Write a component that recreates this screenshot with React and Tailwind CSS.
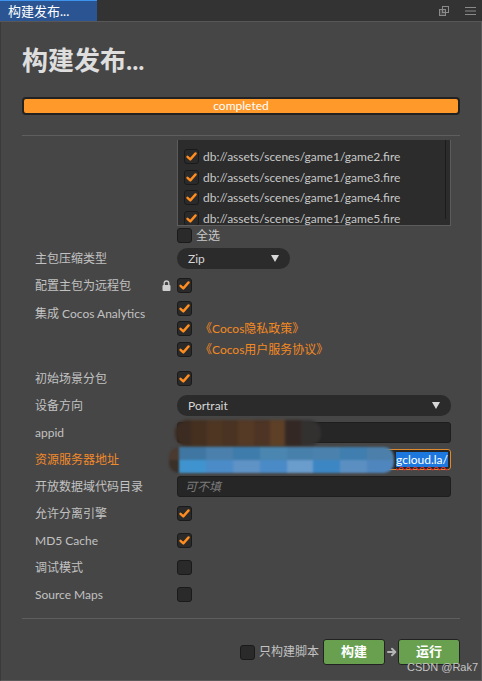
import React from 'react'

const FONT = "font-[Lato,'Noto_Sans_CJK_SC',sans-serif]"

function Check({ checked }) {
  return (
    <div className="w-[15px] h-[15px] shrink-0 rounded-[3px] bg-[#2a2a2a] border border-[#1a1a1a] flex items-center justify-center">
      {checked && (
        <svg width="13" height="13" viewBox="0 0 13 13">
          <path d="M2.5 6.8 L5.3 9.4 L10.6 3.4" fill="none" stroke="#ff8d1f" strokeWidth="2.4" strokeLinecap="round" strokeLinejoin="round" />
        </svg>
      )}
    </div>
  )
}

function Label({ children, orange }) {
  return (
    <div className={`w-[155px] shrink-0 pl-[13px] text-[12px] leading-[16px] ${orange ? 'text-[#f28a2b]' : 'text-[#c2c2c2]'}`}>
      {children}
    </div>
  )
}

function Triangle() {
  return (
    <svg width="8" height="7" viewBox="0 0 8 7">
      <path d="M0 0 H8 L4 7 Z" fill="#d8d8d8" />
    </svg>
  )
}

const scenes = ['game2', 'game3', 'game4', 'game5']

export default function App() {
  return (
    <div className={`w-[482px] h-[681px] bg-[#464646] flex flex-col overflow-hidden relative ${FONT}`}>
      {/* tab bar */}
      <div className="h-[22px] shrink-0 bg-[#333333] border-b border-[#575757] flex items-stretch">
        <div className="w-[97px] bg-[#2a5592] border-t border-[#3d93ee] text-white text-[13px] leading-[20px] pl-[8px]">
          构建发布...
        </div>
        <div className="flex-1" />
        <div className="flex items-center gap-[15px] pr-[6px]">
          <svg width="12" height="12" viewBox="0 0 12 12">
            <rect x="1.5" y="4.5" width="6" height="6" fill="#4a4a4a" stroke="#8a8a8a" />
            <rect x="4.5" y="1.5" width="6" height="6" fill="none" stroke="#8a8a8a" />
          </svg>
          <svg width="11" height="10" viewBox="0 0 11 10">
            <path d="M0 1.5 H11 M0 5 H11 M0 8.5 H11" stroke="#8a8a8a" strokeWidth="1.2" />
          </svg>
        </div>
      </div>

      {/* body */}
      <div className="flex-1 flex flex-col px-[21px] border-x border-b border-[#5a5a5a] border-l-[#3a3a3a]">
        <div className="mt-[23px] text-[26px] leading-[30px] font-bold text-[#dedede]">构建发布...</div>

        <div className="mt-[22px] h-[18px] rounded-[4px] border-2 border-[#222222] bg-[#ff992a] flex items-center justify-center text-white text-[12px] leading-[14px]">
          completed
        </div>

        <div className="mt-[20px] h-px bg-[#5e5e5e]" />

        {/* scroll area */}
        <div className="relative h-[482px] overflow-hidden">
          {/* outer scrollbar */}
          <div className="absolute left-[444px] top-[14px] w-px h-[175px] bg-[#1e1e1e]" />
          <div className="absolute left-[443px] top-[189px] w-[3px] h-[278px] bg-[#7a7a7a]" />

          <div className="flex flex-col">
            {/* scene list */}
            <div className="mt-[4px] flex">
              <div className="w-[155px] shrink-0" />
              <div className="relative w-[274px] h-[86px] bg-[#2c2c2c] border-x border-b border-[#5c5c5c] overflow-hidden">
                <div className="absolute left-[267px] top-0 w-px h-[79px] bg-[#1c1c1c]" />
                <div className="pt-[9px] pl-[6px] flex flex-col">
                  {scenes.map(s => (
                    <div key={s} className="h-[20.6px] flex items-start gap-[4px]">
                      <Check checked />
                      <span className="text-[12px] leading-[15px] text-[#c8c8c8]">db://assets/scenes/game1/{s}.fire</span>
                    </div>
                  ))}
                </div>
              </div>
            </div>

            {/* select all */}
            <div className="mt-[2px] flex items-center h-[15px]">
              <div className="w-[155px] shrink-0" />
              <Check />
              <span className="ml-[4px] text-[12px] text-[#c8c8c8]">全选</span>
            </div>

            <div className="mt-[5px] flex items-center h-[21px]">
              <Label>主包压缩类型</Label>
              <div className="w-[113px] h-[21px] rounded-full bg-[#2b2b2b] flex items-center justify-between pl-[11px] pr-[11px] text-[12px] text-[#d6d6d6]">
                <span>Zip</span>
                <Triangle />
              </div>
            </div>

            <div className="mt-[9px] flex items-center h-[15px]">
              <Label>
                <div className="flex items-center justify-between pr-[6px]">
                  <span>配置主包为远程包</span>
                  <svg width="9" height="11" viewBox="0 0 9 11">
                    <path d="M2.2 5 V3.3 A2.3 2.3 0 0 1 6.8 3.3 V5" fill="none" stroke="#cfcfcf" strokeWidth="1.3" />
                    <rect x="0.5" y="5" width="8" height="6" rx="1" fill="#cfcfcf" />
                  </svg>
                </div>
              </Label>
              <Check checked />
            </div>

            <div className="mt-[8px] flex items-start">
              <div className="pt-[5px]">
                <Label>集成 Cocos Analytics</Label>
              </div>
              <div className="flex flex-col">
                <div className="h-[15px] flex items-center"><Check checked /></div>
                <div className="mt-[5px] h-[15px] flex items-center gap-[8px]">
                  <Check checked />
                  <span className="text-[12px] text-[#f58a22]">《Cocos隐私政策》</span>
                </div>
                <div className="mt-[6px] h-[15px] flex items-center gap-[8px]">
                  <Check checked />
                  <span className="text-[12px] text-[#f58a22]">《Cocos用户服务协议》</span>
                </div>
              </div>
            </div>

            <div className="mt-[14px] flex items-center h-[15px]">
              <Label>初始场景分包</Label>
              <Check checked />
            </div>

            <div className="mt-[9px] flex items-center h-[21px]">
              <Label>设备方向</Label>
              <div className="w-[274px] h-[21px] rounded-[10px] bg-[#2b2b2b] flex items-center justify-between pl-[11px] pr-[11px] text-[12px] text-[#d6d6d6]">
                <span>Portrait</span>
                <Triangle />
              </div>
            </div>

            <div className="mt-[6px] flex items-center h-[21px]">
              <Label>appid</Label>
              <div className="relative w-[274px] h-[21px] rounded-[3px] bg-[#262626] border border-[#1e1e1e]">
                <div className="absolute -left-[3px] -top-[3px] w-[146px] h-[26px] rounded-[12px] flex overflow-hidden blur-[1.5px]">
                  <div className="flex-1 bg-[#3b2b21]" />
                  <div className="flex-1 bg-[#45301f]" />
                  <div className="flex-1 bg-[#4f3623]" />
                  <div className="flex-1 bg-[#4a3322]" />
                  <div className="flex-1 bg-[#553a25]" />
                  <div className="flex-1 bg-[#4d3424]" />
                  <div className="flex-1 bg-[#5e4026]" />
                  <div className="flex-1 bg-[#332824]" />
                  <div className="w-[20px] bg-[#333030]" />
                </div>
              </div>
            </div>

            <div className="mt-[6px] flex items-center h-[21px]">
              <Label orange>资源服务器地址</Label>
              <div className="relative w-[274px] h-[21px] rounded-[3px] bg-[#262626] border border-[#e08a30] flex items-center justify-end pr-[2px]">
                <span className="bg-[#1c78df] text-white text-[12px] leading-[15px] underline decoration-wavy decoration-[#e03030] underline-offset-2">gcloud.la/</span>
                <div className="absolute -left-[9px] -top-[3px] w-[225px] h-[26px] rounded-[10px] overflow-hidden blur-[1px] flex flex-col">
                  <div className="flex-1 flex">
                    <div className="w-[10px] bg-[#4a3a30]" />
                    <div className="flex-1 bg-[#3f77a2]" />
                    <div className="flex-1 bg-[#4a80ab]" />
                    <div className="flex-1 bg-[#3e7cab]" />
                    <div className="flex-1 bg-[#4a86b0]" />
                    <div className="flex-1 bg-[#4780ab]" />
                    <div className="flex-1 bg-[#4a82ad]" />
                    <div className="flex-1 bg-[#3f7eae]" />
                    <div className="flex-1 bg-[#4c80aa]" />
                  </div>
                  <div className="flex-1 flex">
                    <div className="w-[10px] bg-[#3a3028]" />
                    <div className="flex-1 bg-[#3f94cf]" />
                    <div className="flex-1 bg-[#4a8bc8]" />
                    <div className="flex-1 bg-[#5f92c5]" />
                    <div className="flex-1 bg-[#4a8ac6]" />
                    <div className="flex-1 bg-[#6a9ccc]" />
                    <div className="flex-1 bg-[#3c86c4]" />
                    <div className="flex-1 bg-[#5b8fc2]" />
                    <div className="flex-1 bg-[#4f86bd]" />
                  </div>
                </div>
              </div>
            </div>

            <div className="mt-[6px] flex items-center h-[21px]">
              <Label>开放数据域代码目录</Label>
              <div className="w-[274px] h-[21px] rounded-[3px] bg-[#262626] border border-[#1e1e1e] flex items-center pl-[7px] text-[12px] italic text-[#7a7a7a]">
                可不填
              </div>
            </div>

            <div className="mt-[9px] flex items-center h-[15px]">
              <Label>允许分离引擎</Label>
              <Check checked />
            </div>
            <div className="mt-[12px] flex items-center h-[15px]">
              <Label>MD5 Cache</Label>
              <Check checked />
            </div>
            <div className="mt-[12px] flex items-center h-[15px]">
              <Label>调试模式</Label>
              <Check />
            </div>
            <div className="mt-[12px] flex items-center h-[15px]">
              <Label>Source Maps</Label>
              <Check />
            </div>
          </div>
        </div>

        <div className="h-px bg-[#5e5e5e]" />

        {/* footer */}
        <div className="mt-[20px] flex items-center justify-end">
          <Check />
          <span className="ml-[4px] mr-[4px] text-[12px] text-[#c2c2c2]">只构建脚本</span>
          <button className="w-[62px] h-[26px] rounded-[3px] bg-[#68a04f] border border-[#222] text-white text-[13px] font-bold">构建</button>
          <svg className="ml-[2px] mr-[1px]" width="10" height="10" viewBox="0 0 10 10">
            <path d="M1 5 H8 M5 1.8 L8.3 5 L5 8.2" fill="none" stroke="#b5b5b5" strokeWidth="2" strokeLinecap="round" strokeLinejoin="round" />
          </svg>
          <button className="w-[62px] h-[26px] rounded-[3px] bg-[#68a04f] border border-[#222] text-white text-[13px] font-bold">运行</button>
        </div>
      </div>

      <div className="absolute left-[407px] top-[661px] text-[11px] leading-[12px] text-[#c4c4c4] font-['Liberation_Sans',sans-serif]">
        CSDN @Rak7
      </div>
    </div>
  )
}
